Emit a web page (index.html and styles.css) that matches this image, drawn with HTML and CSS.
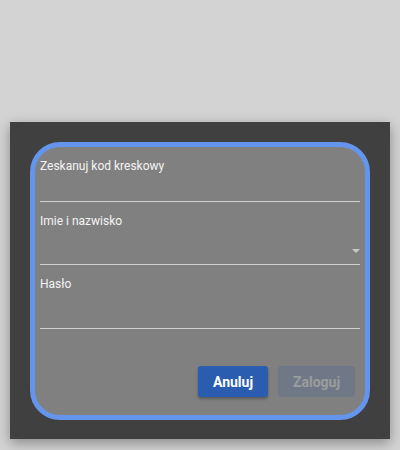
FILE: index.html
```html
<!DOCTYPE html>
<html lang="pl">
<head>
<meta charset="utf-8">
<link rel="stylesheet" href="styles.css">
</head>
<body>
<div class="panel">
  <div class="card">
    <div class="field field-first">
      <div class="label">Zeskanuj kod kreskowy</div>
      <div class="input input-short"></div>
    </div>
    <div class="field">
      <div class="label">Imie i nazwisko</div>
      <div class="input"><span class="arrow"></span></div>
    </div>
    <div class="field">
      <div class="label">Hasło</div>
      <div class="input input-tall"></div>
    </div>
    <div class="actions">
      <button class="btn btn-primary">Anuluj</button>
      <button class="btn btn-disabled">Zaloguj</button>
    </div>
  </div>
</div>
</body>
</html>
```

FILE: styles.css
```css
html, body {
  margin: 0;
  padding: 0;
}
body {
  background: #d3d3d3;
  width: 400px;
  height: 450px;
  font-family: Roboto, "Liberation Sans", sans-serif;
  padding-top: 122px;
  padding-left: 10px;
  box-sizing: border-box;
}
.panel {
  width: 380px;
  height: 317px;
  box-sizing: border-box;
  background: #404040;
  padding: 20px 20px 19px 20px;
  box-shadow: 0 4px 12px rgba(0, 0, 0, 0.35);
}
.card {
  height: 278px;
  box-sizing: border-box;
  border: 5px solid #6495ed;
  border-radius: 30px;
  background: #808080;
  padding: 11px 5px 0 5px;
  display: flex;
  flex-direction: column;
}
.field {
  border-bottom: 1px solid #d0d0d0;
  padding-top: 11px;
}
.field-first {
  padding-top: 0;
}
.label {
  font-size: 12px;
  line-height: 16px;
  color: #f4f4f4;
}
.input {
  height: 35px;
  position: relative;
}
.input-short {
  height: 27px;
}
.input-tall {
  height: 36px;
}
.arrow {
  position: absolute;
  right: 0;
  top: 20px;
  width: 0;
  height: 0;
  border-left: 4px solid transparent;
  border-right: 4px solid transparent;
  border-top: 4px solid #c8c8c8;
}
.actions {
  display: flex;
  justify-content: flex-end;
  gap: 10px;
  margin-top: 37px;
  padding-right: 5px;
}
.btn {
  height: 31px;
  border: none;
  border-radius: 3px;
  font-family: Roboto, "Liberation Sans", sans-serif;
  font-size: 14px;
  font-weight: 700;
  padding: 0;
}
.btn-primary {
  width: 70px;
  background: #2a5cb0;
  color: #ffffff;
  box-shadow: 0 2px 3px rgba(0, 0, 0, 0.3);
}
.btn-disabled {
  width: 77px;
  background: #707888;
  color: #9c9c9c;
}
```
